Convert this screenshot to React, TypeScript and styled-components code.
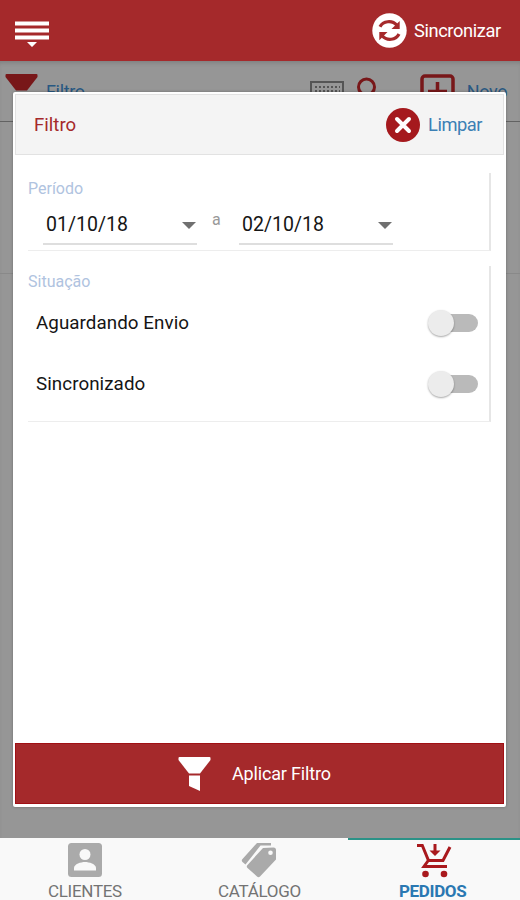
import React from "react";
import styled, { createGlobalStyle } from "styled-components";

const Global = createGlobalStyle`
  * { box-sizing: border-box; }
  body { margin: 0; background: #959595; font-family: Roboto, sans-serif; }
  svg { display: block; flex: none; }
`;

const Screen = styled.div`
  position: relative;
  width: 520px;
  height: 900px;
  display: flex;
  flex-direction: column;
  overflow: hidden;
  background: #969696;
`;

const TopBar = styled.header`
  height: 61px;
  flex: none;
  display: flex;
  justify-content: space-between;
  padding: 0 18px 0 14px;
  background: #a5292b;
`;

const MenuIcon = styled.svg`
  margin-top: 20px;
`;

const SyncButton = styled.div`
  display: flex;
  align-items: center;
  gap: 7px;
  height: 60px;
  padding-top: 1px;
  color: #fff;
`;

const Label = styled.span<{ $size: number; $width: number; $color?: string; $weight?: number; $spacing?: number }>`
  font-size: ${(p) => p.$size}px;
  font-weight: ${(p) => p.$weight ?? 400};
  letter-spacing: ${(p) => p.$spacing ?? 0}px;
  width: ${(p) => p.$width}px;
  line-height: 24px;
  color: ${(p) => p.$color ?? "inherit"};
  white-space: nowrap;
`;

const DimmedPage = styled.main`
  flex: 1;
  background: #969696;
  box-shadow: inset 0 4px 4px -2px rgba(0, 0, 0, 0.15);
`;

const DimmedToolbar = styled.div`
  height: 61px;
  display: flex;
  align-items: flex-start;
  padding: 12px 12px 0 5px;
  border-bottom: 1px solid #626262;
  color: #285882;
`;

const ToolGroup = styled.div<{ $gap: number; $left?: number }>`
  display: flex;
  gap: ${(p) => p.$gap}px;
  margin-left: ${(p) => p.$left ?? 0}px;
`;

const ToolText = styled.span`
  font-size: 18px;
  letter-spacing: -0.35px;
  line-height: 24px;
  padding-top: 7px;
`;

const DimmedList = styled.div`
  height: 152px;
  border-bottom: 1px solid #898989;
`;

const Dialog = styled.section`
  position: absolute;
  left: 13px;
  top: 92px;
  width: 493px;
  height: 715px;
  display: flex;
  flex-direction: column;
  padding: 2px 2px 3px;
  background: #fff;
  border-radius: 2px;
  box-shadow: 0 0 3px rgba(0, 0, 0, 0.3);
`;

const DialogHeader = styled.div`
  height: 61px;
  flex: none;
  display: flex;
  align-items: center;
  justify-content: space-between;
  padding: 0 21px 0 18px;
  background: #f4f4f4;
  border: 1px solid #e2e2e2;
`;

const ClearButton = styled.div`
  display: flex;
  align-items: center;
  gap: 8px;
`;

const DialogBody = styled.div`
  flex: 1;
  display: flex;
  flex-direction: column;
  gap: 15px;
  padding: 18px 13px 0;
`;

const Group = styled.fieldset<{ $height: number; $top: number }>`
  height: ${(p) => p.$height}px;
  margin: 0;
  padding: ${(p) => p.$top}px 0 0;
  min-width: 0;
  border: 0 solid #e6e6e6;
  border-right-width: 2px;
  border-bottom: 1px solid #ededed;
`;

const GroupTitle = styled.div`
  color: #b0c3e0;
  font-size: 16px;
  line-height: 24px;
`;

const DateRow = styled.div`
  display: flex;
  padding: 7px 0 0 15px;
`;

const DateSelect = styled.div`
  width: 154px;
  height: 37px;
  display: flex;
  align-items: center;
  justify-content: space-between;
  padding: 0 1px 2px 3px;
  border-bottom: 2px solid #dedede;
  color: #151515;
`;

const RangeWord = styled.span`
  width: 42px;
  padding-left: 15px;
  font-size: 16px;
  line-height: 24px;
  color: #999;
`;

const SwitchRow = styled.div`
  height: 61px;
  display: flex;
  align-items: center;
  justify-content: space-between;
  padding: 0 11px 4px 8px;
  color: #151515;
`;

const SwitchBody = styled.div`
  width: 49px;
  height: 18px;
  display: flex;
  align-items: center;
  border-radius: 9px;
  background: #bababa;
`;

const Knob = styled.div`
  width: 26px;
  height: 26px;
  flex: none;
  margin-left: -1px;
  border-radius: 50%;
  background: #ececec;
  box-shadow: 0 1px 2px rgba(0, 0, 0, 0.35);
`;

const ApplyButton = styled.div`
  height: 61px;
  flex: none;
  display: flex;
  align-items: center;
  justify-content: center;
  gap: 21px;
  padding: 1px 8px 0 0;
  color: #fff;
  background: #a5292b;
  border: 1px solid #a00f14;
`;

const TabBar = styled.nav`
  height: 62px;
  flex: none;
  display: grid;
  grid-template-columns: 170px 178px 172px;
  background: #f9f9f9;
`;

const Tab = styled.div<{ $active?: boolean }>`
  display: flex;
  flex-direction: column;
  align-items: center;
  padding-top: ${(p) => (p.$active ? 2 : 4)}px;
  border-top: ${(p) => (p.$active ? "2px solid #2b9287" : "0")};
`;

const TabText = styled(Label)`
  line-height: 20px;
  margin-top: 3px;
`;

function Funnel({ color }: { color: string }) {
  return (
    <svg width="33" height="36" viewBox="0 0 33 36" fill={color}>
      <path d="M1.500 1H31.500Q32.500 1 32.500 2V4L22 17.500H11L.5 4V2Q.5 1 1.500 1Z" />
      <path d="M11 19.500H22V35L11 30Z" />
    </svg>
  );
}

function SyncIcon() {
  return (
    <svg width="35" height="35" viewBox="0 0 35 35">
      <circle cx="17.5" cy="17.5" r="17.2" fill="#fff" />
      <g fill="none" stroke="#a5292b" strokeWidth="3.2">
        <path d="M8 13.800C11 8 20 6.500 25 12.500" />
        <path d="M27 21C24 27 15 28.500 10 22.500" />
      </g>
      <path d="M27.700 8V16H19.500Z M7.300 27.300V19H15.500Z" fill="#a5292b" />
    </svg>
  );
}

function PersonIcon() {
  return (
    <svg width="36" height="36" viewBox="0 0 36 36">
      <rect x="1" y="1" width="34" height="34" rx="3.500" fill="#aaa" />
      <circle cx="18" cy="12.500" r="5.500" fill="#f9f9f9" />
      <path d="M7 28.500V26C7 22 14 20 18 20S29 22 29 26V28.500Z" fill="#f9f9f9" />
    </svg>
  );
}

function TagsIcon() {
  return (
    <svg width="36" height="36" viewBox="0 0 36 36" fill="#aaa">
      <path d="M16 1H30V3.500H19.500L4.500 22.500L1.500 20Q0 18.500 1.500 17Z" />
      <path
        fillRule="evenodd"
        d="M22 6L32.500 5.500Q35 5.500 35 8V17.500L19 34.500Q17.500 36 16 34.500L6.500 26Q5 24.500 6.500 23ZM29.500 8.500A2.300 2.300 0 1 0 29.500 13.100A2.300 2.300 0 1 0 29.500 8.500Z"
      />
    </svg>
  );
}

function CartIcon() {
  return (
    <svg width="36" height="36" viewBox="0 0 36 36" fill="none" stroke="#a9191d" strokeWidth="3">
      <path d="M1 3.500H6.300L12.500 18.500H27L34 5" />
      <path d="M12.300 18.500L8 24.500H31" />
      <path d="M19 2V9" />
      <path d="M13.500 8.500H24.500L19 14Z" fill="#a9191d" stroke="none" />
      <circle cx="9.500" cy="32" r="3.300" fill="#a9191d" stroke="none" />
      <circle cx="28" cy="32" r="3.300" fill="#a9191d" stroke="none" />
    </svg>
  );
}

function DateField({ value }: { value: string }) {
  return (
    <DateSelect>
      <Label $size={19.5} $width={90}>{value}</Label>
      <svg width="14" height="8" viewBox="0 0 14 8"><path d="M0 1H14L7 8Z" fill="#707070" /></svg>
    </DateSelect>
  );
}

function SwitchItem({ label, width }: { label: string; width: number }) {
  return (
    <SwitchRow>
      <Label $size={18.8} $width={width} $spacing={0.06}>{label}</Label>
      <SwitchBody><Knob /></SwitchBody>
    </SwitchRow>
  );
}

export default function App() {
  return (
    <>
      <Global />
      <Screen>
        <TopBar>
          <MenuIcon width="36" height="28" viewBox="0 0 36 28" fill="#fff">
            <path d="M1 1.500H35V5.500H1Z M1 8.500H35V12.500H1Z M1 15.500H35V19.500H1Z M13 22H23L18 27Z" />
          </MenuIcon>
          <SyncButton>
            <SyncIcon />
            <Label $size={18.3} $width={88} $spacing={-0.4}>Sincronizar</Label>
          </SyncButton>
        </TopBar>
        <DimmedPage>
          <DimmedToolbar>
            <ToolGroup $gap={8}>
              <Funnel color="#781719" />
              <ToolText>Filtro</ToolText>
            </ToolGroup>
            <ToolGroup $gap={13} $left={225}>
              <svg width="34" height="32" viewBox="0 0 34 32" fill="none" stroke="#555" strokeWidth="2">
                <rect x="1" y="9" width="32" height="21" />
                <path d="M5 14H30M5 18H30" strokeDasharray="2 2" />
              </svg>
              <svg width="22" height="32" viewBox="0 0 22 32" fill="none" stroke="#781719" strokeWidth="3">
                <circle cx="9.500" cy="14" r="8" /><path d="M15 20L22 28" />
              </svg>
            </ToolGroup>
            <ToolGroup $gap={12} $left={41}>
              <svg width="35" height="35" viewBox="0 0 35 35" fill="none" stroke="#781719" strokeWidth="3.500">
                <rect x="2" y="3" width="31" height="31" rx="3" /><path d="M17.500 9V28M8 18.500H27" />
              </svg>
              <ToolText>Novo</ToolText>
            </ToolGroup>
          </DimmedToolbar>
          <DimmedList />
        </DimmedPage>
        <TabBar>
          <Tab>
            <PersonIcon />
            <TabText $size={17} $width={74} $color="#737373" $spacing={-0.3}>CLIENTES</TabText>
          </Tab>
          <Tab>
            <TagsIcon />
            <TabText $size={17} $width={82} $color="#737373" $spacing={-0.3}>CATÁLOGO</TabText>
          </Tab>
          <Tab $active>
            <CartIcon />
            <TabText $size={17} $width={70} $color="#2a78b2" $weight={700} $spacing={-0.35}>PEDIDOS</TabText>
          </Tab>
        </TabBar>
        <Dialog>
          <DialogHeader>
            <Label $size={18.6} $width={44} $color="#a5292b">Filtro</Label>
            <ClearButton>
              <svg width="34" height="34" viewBox="0 0 34 34">
                <circle cx="17" cy="17" r="17" fill="#a5191d" />
                <path d="M11 11L23 23M23 11L11 23" stroke="#fff" strokeWidth="4" strokeLinecap="round" />
              </svg>
              <Label $size={18.3} $width={54} $color="#3c80b5" $spacing={-0.45}>Limpar</Label>
            </ClearButton>
          </DialogHeader>
          <DialogBody>
            <Group $height={78} $top={4}>
              <GroupTitle>Período</GroupTitle>
              <DateRow>
                <DateField value="01/10/18" />
                <RangeWord>a</RangeWord>
                <DateField value="02/10/18" />
              </DateRow>
            </Group>
            <Group $height={156} $top={4}>
              <GroupTitle>Situação</GroupTitle>
              <SwitchItem label="Aguardando Envio" width={154} />
              <SwitchItem label="Sincronizado" width={110} />
            </Group>
          </DialogBody>
          <ApplyButton>
            <Funnel color="#fff" />
            <Label $size={18} $width={101} $spacing={-0.17}>Aplicar Filtro</Label>
          </ApplyButton>
        </Dialog>
      </Screen>
    </>
  );
}
